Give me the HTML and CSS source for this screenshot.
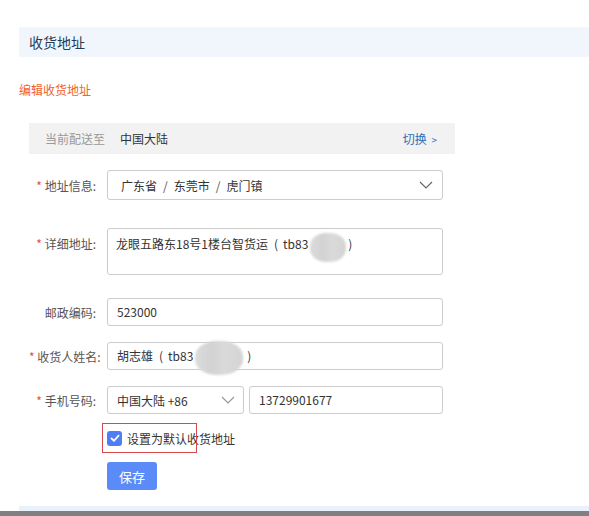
FILE: index.html
```html
<!DOCTYPE html>
<html lang="zh-CN">
<head>
<meta charset="utf-8">
<title>收货地址</title>
<link rel="stylesheet" href="styles.css">
</head>
<body>
<div class="page">
  <div class="section-head">收货地址</div>
  <div class="edit-title">编辑收货地址</div>
  <div class="form">
    <div class="ship-bar">
      <span class="ship-label">当前配送至</span>
      <span class="ship-value">中国大陆</span>
      <span class="ship-switch">切换 <span class="gt">&gt;</span></span>
    </div>

    <div class="row row-region">
      <label class="label"><span class="req">*</span> 地址信息:</label>
      <div class="control select select-wide">
        <span class="val">广东省<span class="sep">/</span>东莞市<span class="sep">/</span>虎门镇</span>
        <svg class="chev" width="14" height="8" viewBox="0 0 14 8"><path d="M1 1 L7 7 L13 1" fill="none" stroke="#666" stroke-width="1.2"/></svg>
      </div>
    </div>

    <div class="row row-detail">
      <label class="label"><span class="req">*</span> 详细地址:</label>
      <div class="control textarea">龙眼五路东18号1楼台智货运<span class="paren">(</span>tb83<span class="blob blob-a"></span><span class="paren-r">)</span></div>
    </div>

    <div class="row row-post">
      <label class="label">邮政编码:</label>
      <div class="control input">523000</div>
    </div>

    <div class="row row-name">
      <label class="label"><span class="req">*</span> 收货人姓名:</label>
      <div class="control input">胡志雄<span class="paren">(</span>tb83<span class="blob blob-b"></span><span class="paren-r">)</span></div>
    </div>

    <div class="row row-phone">
      <label class="label"><span class="req">*</span> 手机号码:</label>
      <div class="phone-group">
        <div class="control select select-code">
          <span class="val">中国大陆 +86</span>
          <svg class="chev" width="14" height="8" viewBox="0 0 14 8"><path d="M1 1 L7 7 L13 1" fill="none" stroke="#999" stroke-width="1.2"/></svg>
        </div>
        <div class="control input phone-input">13729901677</div>
      </div>
    </div>

    <div class="row row-check">
      <span class="label"></span>
      <div class="check-wrap">
        <span class="checkbox">
          <svg width="10" height="8" viewBox="0 0 10 8"><path d="M1 4 L4 6.8 L9 1.2" fill="none" stroke="#fff" stroke-width="1.8"/></svg>
        </span>
        <span class="check-text">设置为默认收货地址</span>
        <span class="highlight"></span>
      </div>
    </div>

    <div class="row row-btn">
      <span class="label"></span>
      <button class="save">保存</button>
    </div>
  </div>
  <div class="bottom-strip"></div>
</div>
<div class="gray-bar"></div>
</body>
</html>
```

FILE: styles.css
```css
* { box-sizing: border-box; }
html, body { margin: 0; padding: 0; background: #fff; }
body {
  font-family: "Microsoft YaHei", "Noto Sans CJK SC", "Noto Sans", sans-serif;
  font-size: 12px;
  color: #333;
  width: 589px;
  height: 516px;
  overflow: hidden;
}
.page { padding: 27px 0 0 19px; }
.section-head {
  height: 30px;
  line-height: 30px;
  background: #f1f6fd;
  padding-left: 10px;
  font-size: 14px;
  color: #263b52;
}
.edit-title {
  margin-top: 24px;
  line-height: 18px;
  height: 18px;
  color: #f2622c;
  font-size: 12px;
}
.form { margin: 24px 0 0 10px; width: 426px; }
.ship-bar {
  height: 31px;
  background: #f2f2f2;
  display: flex;
  align-items: center;
  padding: 0 18px 0 16px;
}
.ship-label { color: #999; width: 75px; }
.ship-value { color: #333; }
.ship-switch { margin-left: auto; color: #2c6fb8; }
.ship-switch .gt { font-size: 10px; margin-left: 2px; }

.row { display: flex; align-items: center; }
.label {
  width: 78px;
  flex: none;
  text-align: right;
  padding-right: 11px;
  color: #555;
  white-space: nowrap;
}
.req { color: #e0523c; }
.control {
  width: 336px;
  border: 1px solid #ccc;
  border-radius: 3px;
  background: #fff;
  color: #333;
}
.select { display: flex; align-items: center; justify-content: space-between; }
.select-wide { height: 30px; padding: 0 9px 0 13px; }
.sep { margin: 0 6px; color: #555; }
.row-region { margin-top: 16px; }
.row-detail { margin-top: 28px; align-items: flex-start; }
.row-detail .label { padding-top: 7px; line-height: 18px; }
.textarea {
  height: 47px;
  padding: 6px 8px;
  line-height: 18px;
  white-space: nowrap;
}
.input { height: 28px; line-height: 26px; padding: 0 9px; white-space: nowrap; }
.paren { margin: 0 5px 0 6px; }
.paren-r { margin-left: 4px; }
.row-post { margin-top: 23px; }
.row-name { margin-top: 16px; }
.row-phone { margin-top: 16px; }
.phone-group { display: flex; gap: 5px; width: 336px; }
.select-code { width: 137px; height: 28px; padding: 0 8px 0 9px; }
.phone-input { width: 194px; }
.blob {
  display: inline-block;
  vertical-align: middle;
  background: linear-gradient(90deg, #dcdcdc 0%, #d2d2d2 35%, #dadada 60%, #d4d4d4 100%);
  border-radius: 45%;
  filter: blur(0.8px);
}
.blob-a { width: 36px; height: 29px; margin: -6px -2px -10px 2px; }
.blob-b { width: 48px; height: 34px; margin: -10px 0 -10px 2px; }

.row-check { margin-top: 16px; }
.check-wrap { position: relative; display: flex; align-items: center; height: 16px; }
.checkbox {
  width: 15px; height: 15px;
  border-radius: 3px;
  background: #4d7ef5;
  display: flex; align-items: center; justify-content: center;
}
.check-text { margin-left: 5px; color: #333; }
.highlight {
  position: absolute;
  left: -5px; top: -7px;
  width: 95px; height: 30px;
  border: 1px solid #d44a4f;
}
.row-btn { margin-top: 16px; }
.save {
  width: 50px; height: 28px;
  border: none;
  border-radius: 3px;
  background: #5a8bf8;
  color: #fff;
  font-family: inherit;
  font-size: 13px;
  padding: 0;
}
.bottom-strip { margin-top: 16px; height: 5px; background: #e9f1fb; }
.gray-bar { height: 5px; background: #808080; }
```
